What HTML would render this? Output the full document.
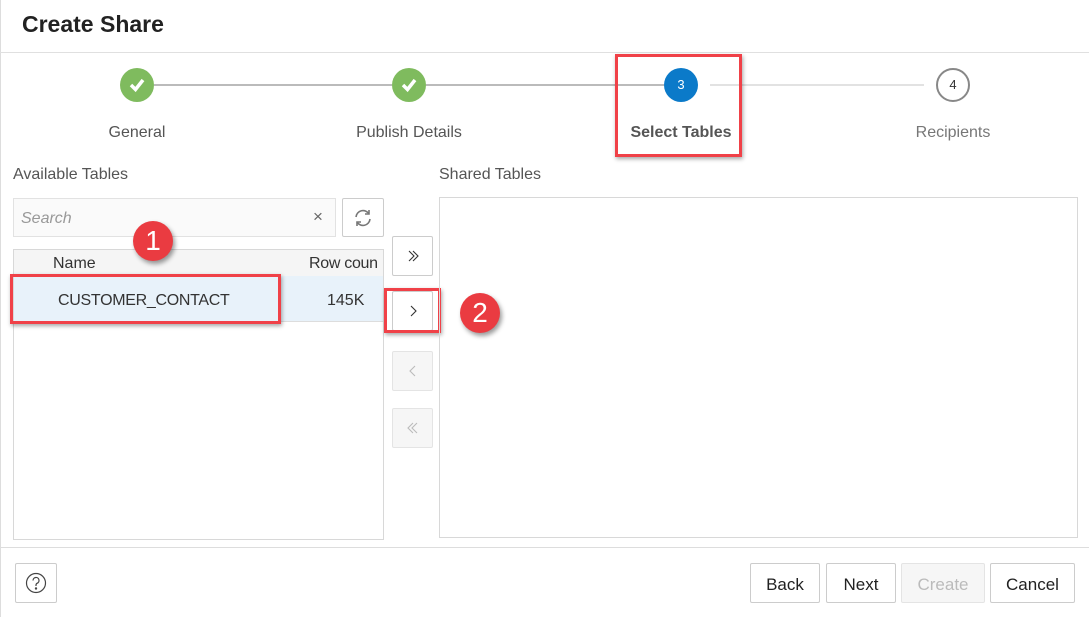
<!DOCTYPE html>
<html><head><style>
*{box-sizing:border-box;margin:0;padding:0}
body{width:1089px;height:617px;background:#fff;font-family:"Liberation Sans",sans-serif;color:#333;position:relative;overflow:hidden}
.a{position:absolute}
.t{font-size:16px;color:#555}
.c{position:absolute;width:34px;height:34px;border-radius:50%;top:68px}
.g{background:#7fbb5e}
.btn{position:absolute;border:1px solid #ccc;border-radius:2px;background:#fff;display:flex;align-items:center;justify-content:center;font-size:17px;color:#222}
.dis{background:#f6f6f6;border-color:#e4e4e4;color:#bbb}
.badge{position:absolute;width:40px;height:40px;border-radius:50%;background:#ea3b41;color:#fff;font-size:28px;display:flex;align-items:center;justify-content:center;box-shadow:2px 3px 5px rgba(0,0,0,.4)}
.red{position:absolute;border:3px solid #f04148;box-shadow:1px 2px 4px rgba(0,0,0,.35)}
</style></head><body>
<div class="a" style="left:0;top:0;width:1px;height:617px;background:#ddd"></div>
<div class="a" style="left:22px;top:11px;font-size:23px;font-weight:bold;color:#222">Create Share</div>
<div class="a" style="left:0;top:52px;width:1089px;height:1px;background:#e0e0e0"></div>

<div class="a" style="left:154px;top:84px;width:238px;height:2px;background:#bbb"></div>
<div class="a" style="left:426px;top:84px;width:238px;height:2px;background:#bbb"></div>
<div class="a" style="left:710px;top:84px;width:214px;height:2px;background:#e2e2e2"></div>
<div class="c g" style="left:120px"><svg width="34" height="34"><path d="M11 17l4.5 4.5L23 12" stroke="#fff" stroke-width="3.5" fill="none"/></svg></div>
<div class="c g" style="left:392px"><svg width="34" height="34"><path d="M11 17l4.5 4.5L23 12" stroke="#fff" stroke-width="3.5" fill="none"/></svg></div>
<div class="c" style="left:664px;background:#0b7ac9;color:#fff;font-size:13px;text-align:center;line-height:34px">3</div>
<div class="c" style="left:936px;border:2px solid #888;color:#333;font-size:13px;text-align:center;line-height:30px">4</div>
<div class="a t" style="left:37px;width:200px;text-align:center;top:124px">General</div>
<div class="a t" style="left:309px;width:200px;text-align:center;top:124px">Publish Details</div>
<div class="a t" style="left:581px;width:200px;text-align:center;top:124px;font-weight:bold;color:#555">Select Tables</div>
<div class="a t" style="left:853px;width:200px;text-align:center;top:124px;color:#777">Recipients</div>
<div class="red" style="left:615px;top:54px;width:127px;height:103px"></div>

<div class="a t" style="left:13px;top:166px">Available Tables</div>
<div class="a t" style="left:439px;top:166px">Shared Tables</div>
<div class="a" style="left:13px;top:198px;width:323px;height:39px;border:1px solid #e2e2e2;background:#fafafa"></div>
<div class="a" style="left:21px;top:210px;font-size:16px;font-style:italic;color:#999">Search</div>
<div class="a" style="left:313px;top:207px;font-size:17px;color:#666">×</div>
<div class="btn" style="left:342px;top:198px;width:42px;height:39px"><svg width="22" height="22" viewBox="0 0 22 22" fill="none" stroke="#777" stroke-width="1.6"><path d="M4 10a7 7 0 0 1 13-3"/><path d="M17 3v4h-4"/><path d="M18 12a7 7 0 0 1-13 3"/><path d="M5 19v-4h4"/></svg></div>

<div class="a" style="left:13px;top:249px;width:371px;height:291px;border:1px solid #d8d8d8"></div>
<div class="a" style="left:14px;top:250px;width:369px;height:26px;background:#f5f5f5"></div>
<div class="a t" style="left:53px;top:255px;color:#333">Name</div>
<div class="a t" style="left:309px;top:255px;color:#333;width:74px;overflow:hidden;white-space:nowrap;letter-spacing:-0.3px">Row coun</div>
<div class="a" style="left:14px;top:276px;width:369px;height:46px;background:#e8f2fa;border-bottom:1px solid #ddd"></div>
<div class="a t" style="left:58px;top:292px;color:#333;letter-spacing:-0.3px">CUSTOMER_CONTACT</div>
<div class="a t" style="left:327px;top:292px;color:#333">145K</div>
<div class="red" style="left:10px;top:274px;width:271px;height:50px"></div>
<div class="badge" style="left:133px;top:221px">1</div>

<div class="btn" style="left:392px;top:236px;width:41px;height:40px"><svg width="14" height="14" viewBox="0 0 14 14" fill="none" stroke="#333" stroke-width="1.1"><path d="M3 2l5 5-5 5M7 2l5 5-5 5"/></svg></div>
<div class="btn" style="left:392px;top:291px;width:41px;height:40px"><svg width="14" height="14" viewBox="0 0 14 14" fill="none" stroke="#333" stroke-width="1.1"><path d="M5 2l5 5-5 5"/></svg></div>
<div class="red" style="left:384px;top:288px;width:57px;height:45px"></div>
<div class="btn dis" style="left:392px;top:351px;width:41px;height:40px"><svg width="14" height="14" viewBox="0 0 14 14" fill="none" stroke="#bbb" stroke-width="1.1"><path d="M9 2L4 7l5 5"/></svg></div>
<div class="btn dis" style="left:392px;top:408px;width:41px;height:40px"><svg width="14" height="14" viewBox="0 0 14 14" fill="none" stroke="#bbb" stroke-width="1.1"><path d="M11 2L6 7l5 5M7 2L2 7l5 5"/></svg></div>
<div class="badge" style="left:460px;top:293px">2</div>

<div class="a" style="left:439px;top:197px;width:639px;height:341px;border:1px solid #d8d8d8"></div>
<div class="a" style="left:0;top:547px;width:1089px;height:1px;background:#ddd"></div>

<div class="btn" style="left:15px;top:563px;width:42px;height:40px"><svg width="22" height="22" viewBox="0 0 22 22" fill="none" stroke="#444" stroke-width="1.2"><circle cx="11" cy="11" r="9.5"/><path d="M8 8.5a3 3 0 1 1 4 2.8c-.8.4-1 1-1 2v.7"/><circle cx="11" cy="16.5" r=".6" fill="#444"/></svg></div>
<div class="btn" style="left:750px;top:563px;width:70px;height:40px;padding-top:3px">Back</div>
<div class="btn" style="left:826px;top:563px;width:70px;height:40px;padding-top:3px">Next</div>
<div class="btn dis" style="left:901px;top:563px;width:84px;height:40px;padding-top:3px">Create</div>
<div class="btn" style="left:990px;top:563px;width:85px;height:40px;padding-top:3px">Cancel</div>
</body></html>
